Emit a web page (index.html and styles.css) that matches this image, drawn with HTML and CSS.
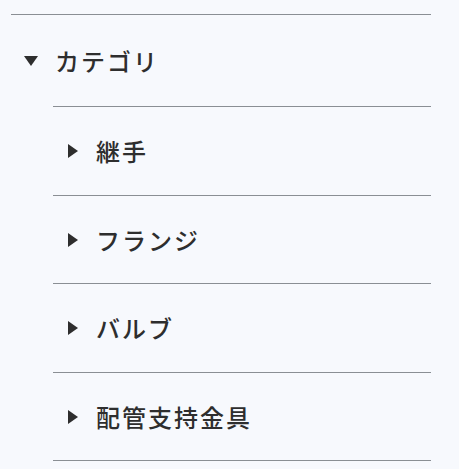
FILE: index.html
```html
<!DOCTYPE html>
<html lang="ja">
<head>
  <meta charset="UTF-8">
  <meta name="viewport" content="width=device-width, initial-scale=1.0">
  <title>カテゴリ</title>
  <link rel="stylesheet" href="styles.css">
</head>
<body>
  <ul class="tree">
    <li class="cat">
      <div class="row open"><span class="arrow"></span>カテゴリ</div>
      <ul class="sub">
        <li class="row"><span class="arrow"></span>継手</li>
        <li class="row"><span class="arrow"></span>フランジ</li>
        <li class="row"><span class="arrow"></span>バルブ</li>
        <li class="row"><span class="arrow"></span>配管支持金具</li>
      </ul>
    </li>
  </ul>
</body>
</html>
```

FILE: styles.css
```css
body {
  margin: 0;
  background-color: #f7f9fd;
  color: #2e2e2e;
  font-family: "Noto Sans CJK JP", "Noto Sans", sans-serif;
}
ul {
  list-style: none;
  margin: 0;
  padding: 0;
}
.tree {
  margin: 14px 28px 0 11px;
  border-top: 1px solid #8a8f94;
}
.row {
  display: flex;
  align-items: center;
  font-size: 24px;
  font-weight: 500;
  line-height: 36px;
  letter-spacing: 2px;
}
.cat > .row {
  padding: 28px 0 27px 13px;
}
.sub {
  margin-left: 42px;
}
.sub .row {
  border-top: 1px solid #8a8f94;
  padding: 26px 0 25.5px 15px;
}
.sub .row:last-child {
  border-bottom: 1px solid #8a8f94;
}
.arrow {
  width: 0;
  height: 0;
  border-left: 10px solid #2e2e2e;
  border-top: 7px solid transparent;
  border-bottom: 7px solid transparent;
  margin-right: 18px;
}
.open .arrow {
  border-top: 10px solid #2e2e2e;
  border-left: 7px solid transparent;
  border-right: 7px solid transparent;
  border-bottom: 0;
  margin-right: 17px;
}
```
